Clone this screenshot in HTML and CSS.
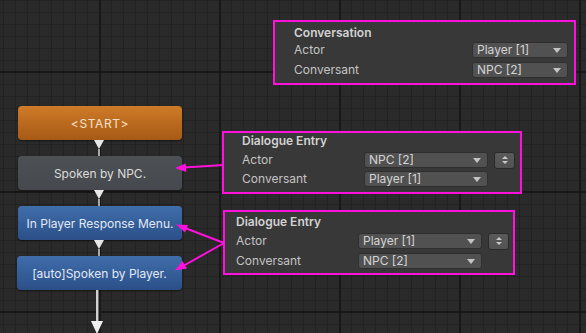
FILE: index.html
```html
<!DOCTYPE html>
<html lang="en">
<head>
<meta charset="utf-8"/>
<meta content="width=device-width, initial-scale=1.0" name="viewport"/>
<title>Dialogue Graph</title>
<link rel="stylesheet" href="styles.css">
</head>
<body>
<div class="graph">

<div class="flow">
    <div class="node node-start">&lt;START&gt;</div>
    <div class="link"><span class="tip"></span><span class="wire"></span></div>
    <div class="node node-npc">Spoken by NPC.</div>
    <div class="link"><span class="tip"></span><span class="wire"></span></div>
    <div class="node node-player">In Player Response Menu.</div>
    <div class="link"><span class="tip"></span><span class="wire"></span></div>
    <div class="node node-player node-last">[auto]Spoken by Player.</div>
    <div class="link link-out"><span class="wire"></span><span class="tip"></span></div>
</div>

<!-- callout arrows from inspector panels to nodes -->
<svg class="pointers" width="586" height="333" viewBox="0 0 586 333">
    <g stroke="#ff10dc" stroke-width="2" fill="none">
        <line x1="224" y1="165" x2="184" y2="167.5"/>
        <line x1="224" y1="243" x2="185" y2="228"/>
        <line x1="224" y1="243" x2="184" y2="265.5"/>
    </g>
    <g fill="#ff10dc">
        <polygon points="175,168 186.3,172 185.7,163.4"/>
        <polygon points="176,224.5 188,225 185,232.5"/>
        <polygon points="175,270.5 187,268.5 182.5,261"/>
    </g>
</svg>

<div class="panel panel-conv">
    <div class="panel-title">Conversation</div>
    <div class="row">
        <span class="label">Actor</span>
        <span class="dropdown">Player [1]</span>
    </div>
    <div class="row">
        <span class="label">Conversant</span>
        <span class="dropdown">NPC [2]</span>
    </div>
</div>

<div class="panel panel-entry1">
    <div class="panel-title">Dialogue Entry</div>
    <div class="row">
        <span class="label">Actor</span>
        <span class="dropdown">NPC [2]</span>
        <span class="stepper"></span>
    </div>
    <div class="row">
        <span class="label">Conversant</span>
        <span class="dropdown">Player [1]</span>
    </div>
</div>

<div class="panel panel-entry2">
    <div class="panel-title">Dialogue Entry</div>
    <div class="row">
        <span class="label">Actor</span>
        <span class="dropdown">Player [1]</span>
        <span class="stepper"></span>
    </div>
    <div class="row">
        <span class="label">Conversant</span>
        <span class="dropdown">NPC [2]</span>
    </div>
</div>

</div>
</body>
</html>
```

FILE: styles.css
```css
body {
    margin: 0;
    padding: 0;
    font-family: Inter, "Noto Sans", sans-serif;
    font-size: 12px;
    background-color: #2a2a2a;
    background-image:
        linear-gradient(to right, #181818 2px, transparent 2px),
        linear-gradient(to bottom, #181818 2px, transparent 2px),
        linear-gradient(to right, #222222 1px, transparent 1px),
        linear-gradient(to bottom, #222222 1px, transparent 1px);
    background-size: 120px 120px, 120px 120px, 12px 12px, 12px 12px;
    background-position: 99px 0, 0 71px, 3px 0, 0 0;
    overflow: hidden;
}

.graph {
    position: relative;
    width: 586px;
    height: 333px;
    overflow: hidden;
}

/* node column */
.flow {
    display: flex;
    flex-direction: column;
    width: 164px;
    padding: 106px 0 0 18px;
}

.node {
    height: 34px;
    display: flex;
    align-items: center;
    justify-content: center;
    border-radius: 4px;
    box-sizing: border-box;
    box-shadow: 0 1px 2px rgba(0, 0, 0, 0.5);
}

.node-start {
    background: linear-gradient(#cf7b28, #a65a15);
    color: #f6e2cc;
    letter-spacing: 0.6px;
}

.node-npc {
    background: linear-gradient(#4d5055, #45484d);
    color: #dcdcdc;
}

.node-player {
    background: linear-gradient(#3f6eab, #2b4f88);
    color: #e2e9f4;
}

.node-last {
    margin-left: -1px;
}

.link {
    height: 16px;
    display: flex;
    flex-direction: column;
    align-items: center;
    padding-right: 2px;
}

.link .tip {
    width: 0;
    height: 0;
    border-left: 5px solid transparent;
    border-right: 5px solid transparent;
    border-top: 9px solid #e8e8e8;
}

.link .wire {
    flex: 1;
    width: 2px;
    background: #a8a8a8;
}

.link-out {
    height: 44px;
    padding-right: 6px;
}

.link-out .wire {
    background: #d0d0d0;
    box-shadow: 1px 0 0 #6a6a6a;
}

.link-out .tip {
    flex: none;
    border-left-width: 6px;
    border-right-width: 6px;
    border-top-width: 13px;
    border-top-color: #f0f0f0;
}

.pointers {
    position: absolute;
    left: 0;
    top: 0;
}

/* inspector callouts */
.panel {
    position: absolute;
    box-sizing: border-box;
    border: 2px solid #ff10dc;
    background: #383838;
    color: #c4c4c4;
}

.panel-title {
    line-height: 16px;
    font-weight: 600;
    color: #d2d2d2;
}

.row {
    display: flex;
    align-items: center;
    height: 16px;
    line-height: 16px;
    margin-top: 4px;
}

.panel-title + .row {
    margin-top: 2px;
}

.dropdown {
    position: relative;
    box-sizing: border-box;
    height: 16px;
    padding-left: 4px;
    border-radius: 3px;
    background: #515151;
    border: 1px solid #2f2f2f;
    line-height: 14px;
    color: #d4d4d4;
}

.dropdown::after {
    content: "";
    position: absolute;
    right: 6px;
    top: 5px;
    border-left: 4px solid transparent;
    border-right: 4px solid transparent;
    border-top: 5px solid #c4c4c4;
}

.stepper {
    position: relative;
    box-sizing: border-box;
    width: 21px;
    height: 17px;
    margin-left: 6px;
    border-radius: 3px;
    background: linear-gradient(#5a5a5a, #525252);
    border: 1px solid #2a2a2a;
}

.stepper::before,
.stepper::after {
    content: "";
    position: absolute;
    left: 7px;
    border-left: 3px solid transparent;
    border-right: 3px solid transparent;
}

.stepper::before {
    top: 3px;
    border-bottom: 3px solid #c8c8c8;
}

.stepper::after {
    top: 8px;
    border-top: 3px solid #c8c8c8;
}

.panel-conv {
    left: 273px;
    top: 20px;
    width: 303px;
    height: 65px;
    padding: 3px 0 0 19px;
}

.panel-conv .panel-title + .row {
    margin-top: 1px;
}

.panel-conv .label {
    width: 178px;
}

.panel-conv .dropdown {
    width: 96px;
}

.panel-entry1 {
    left: 222px;
    top: 131px;
    width: 300px;
    height: 63px;
    padding: 0 0 0 18px;
}

.panel-entry1 .panel-title + .row {
    margin-top: 3px;
}

.panel-entry1 .row + .row {
    margin-top: 3px;
}

.panel-entry1 .label,
.panel-entry2 .label {
    width: 122px;
}

.panel-entry1 .dropdown,
.panel-entry2 .dropdown {
    width: 124px;
}

.panel-entry2 {
    left: 223px;
    top: 210px;
    width: 292px;
    height: 65px;
    padding: 2px 0 0 11px;
}

.panel-entry2 .panel-title + .row {
    margin-top: 3px;
}
```
